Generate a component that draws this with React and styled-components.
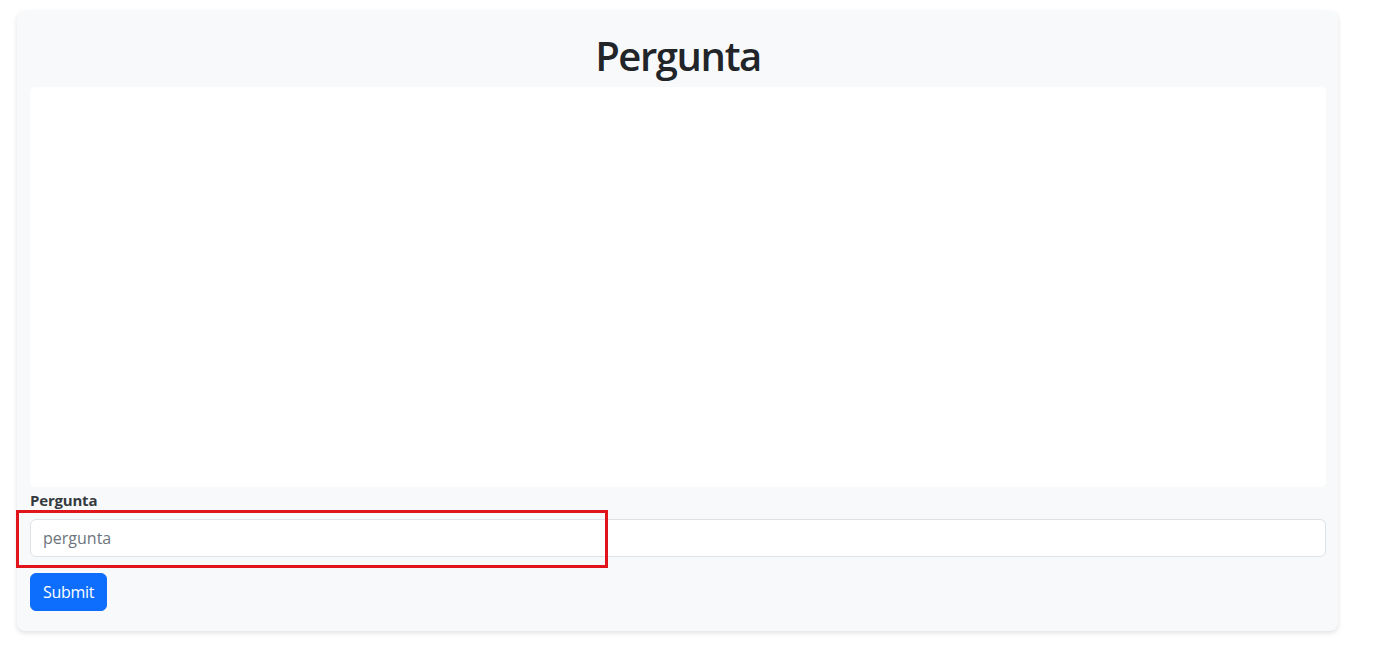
import React, { useState } from "react";
import styled, { createGlobalStyle } from "styled-components";

const GlobalStyle = createGlobalStyle`
  html, body {
    margin: 0;
    padding: 0;
    background: #fff;
  }
  body {
    font-family: "Open Sans", "Noto Sans", "Liberation Sans", sans-serif;
    color: #212529;
  }
  * {
    box-sizing: border-box;
  }
`;

const Page = styled.div`
  padding: 11px 55px 30px 17px;
`;

const Card = styled.div`
  background: #f8f9fa;
  border-radius: 8px;
  box-shadow: 0 2px 5px rgba(0, 0, 0, 0.12);
  padding: 21px 12px 20px 13px;
`;

const Title = styled.h1`
  margin: 0 0 7px;
  font-size: 40px;
  line-height: 48px;
  font-weight: 600;
  text-align: center;
  letter-spacing: -1.4px;
  color: #212529;
`;

const Board = styled.div`
  height: 400px;
  background: #fff;
  border-radius: 5px;
`;

const Form = styled.form`
  display: flex;
  flex-direction: column;
  align-items: flex-start;
`;

const Label = styled.label`
  margin: 2px 0 8px;
  font-size: 15px;
  line-height: 22px;
  font-weight: 700;
  color: #343a40;
  letter-spacing: -0.2px;
`;

const Field = styled.div`
  position: relative;
  width: 100%;
`;

const Input = styled.input`
  display: block;
  width: 100%;
  height: 38px;
  padding: 6px 12px;
  font-family: inherit;
  font-size: 16px;
  color: #212529;
  background: #fff;
  border: 1px solid #dee2e6;
  border-radius: 6px;
  outline: none;
  &::placeholder {
    color: #6c757d;
  }
`;

const Highlight = styled.div`
  position: absolute;
  top: -9px;
  left: -14px;
  width: 592px;
  height: 58px;
  border: 3px solid #e0141b;
  pointer-events: none;
`;

const Button = styled.button`
  margin-top: 16px;
  height: 38px;
  padding: 0 12px;
  font-family: inherit;
  font-size: 16px;
  letter-spacing: -0.3px;
  color: #fff;
  background: #0d6efd;
  border: 1px solid #0d6efd;
  border-radius: 6px;
  cursor: pointer;
`;

export default function App() {
  const [pergunta, setPergunta] = useState("");

  return (
    <Page>
      <GlobalStyle />
      <Card>
        <Title>Pergunta</Title>
        <Board />
        <Form onSubmit={(e) => e.preventDefault()}>
          <Label htmlFor="pergunta">Pergunta</Label>
          <Field>
            <Input
              id="pergunta"
              placeholder="pergunta"
              value={pergunta}
              onChange={(e) => setPergunta(e.target.value)}
            />
            <Highlight />
          </Field>
          <Button type="submit">Submit</Button>
        </Form>
      </Card>
    </Page>
  );
}
